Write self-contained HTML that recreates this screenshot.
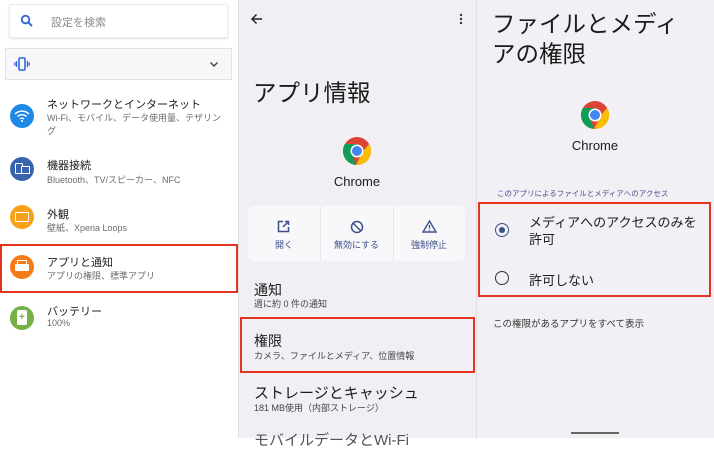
<!DOCTYPE html>
<html><head><meta charset="utf-8"><style>
*{margin:0;padding:0;box-sizing:border-box}
body{width:714px;height:438px;overflow:hidden;position:relative;background:#fff;font-family:"Liberation Sans","Noto Sans CJK JP",sans-serif;color:#202124}
.a{position:absolute;white-space:nowrap}
.p{position:absolute;top:0;height:438px}
.ic{position:absolute;width:24px;height:24px;border-radius:50%;left:10px}
.t{font-size:11px;color:#222}
.s{font-size:9px;color:#6b6b6b}
.red{position:absolute;border:2px solid #e2341f}
</style></head><body>
<div class="p" style="left:0;width:238px;background:#fff"></div>
<div class="p" style="left:238px;width:238px;background:#f1eff4;border-left:1px solid #e2e0e4"></div>
<div class="p" style="left:476px;width:238px;background:#f2f0f5;border-left:1px solid #e0dee2"></div>

<!-- left -->
<div class="a" style="left:9px;top:4px;width:219px;height:34px;background:#fff;border:1px solid #ececec;box-shadow:0 1px 2px rgba(0,0,0,.12);border-radius:2px"></div>
<svg class="a" style="left:20px;top:14px" width="14" height="14" viewBox="0 0 14 14"><circle cx="5.5" cy="5.5" r="3.8" fill="none" stroke="#3367d6" stroke-width="1.8"/><path d="M8.3 8.3L12 12" stroke="#3367d6" stroke-width="2"/></svg>
<div class="a" style="left:51px;top:14px;font-size:11px;color:#8a8a8a">設定を検索</div>
<div class="a" style="left:5px;top:48px;width:227px;height:32px;background:#f7f7f7;border:1px solid #e2e2e2"></div>
<svg class="a" style="left:14px;top:57px" width="16" height="14" viewBox="0 0 16 14"><rect x="5" y="1" width="6" height="12" rx="1" fill="none" stroke="#3367d6" stroke-width="1.6"/><path d="M2.5 4v6M0.8 5.5v3M13.5 4v6M15.2 5.5v3" stroke="#3367d6" stroke-width="1.3"/></svg>
<svg class="a" style="left:209px;top:61px" width="10" height="7" viewBox="0 0 10 7"><path d="M1.5 1.5L5 5L8.5 1.5" fill="none" stroke="#444" stroke-width="1.4"/></svg>

<div class="ic" style="top:104px;background:#1e88e5"></div>
<svg class="a" style="left:14px;top:109px" width="16" height="14" viewBox="0 0 16 14"><path d="M1 5a10 10 0 0 1 14 0M3.5 7.5a6.5 6.5 0 0 1 9 0M6 10a3 3 0 0 1 4 0" fill="none" stroke="#fff" stroke-width="1.5"/><circle cx="8" cy="12" r="1" fill="#fff"/></svg>
<div class="a t" style="left:47px;top:96px">ネットワークとインターネット</div>
<div class="a s" style="left:47px;top:111px">Wi-Fi、モバイル、データ使用量、テザリン</div>
<div class="a s" style="left:47px;top:124px">グ</div>

<div class="ic" style="top:157px;background:#3a63ad"></div>
<div class="a" style="left:15px;top:163px;width:8px;height:11px;border:1.5px solid #fff;border-radius:1px"></div>
<div class="a" style="left:21px;top:166px;width:9px;height:8px;border:1.5px solid #fff;background:#3a63ad"></div>
<div class="a t" style="left:47px;top:157px">機器接続</div>
<div class="a s" style="left:47px;top:173px">Bluetooth、TV/スピーカー、NFC</div>

<div class="ic" style="top:205px;background:#f9a11b"></div>
<div class="a" style="left:15px;top:212px;width:14px;height:10px;border:1.5px solid #fff;border-radius:1px"></div>
<div class="a t" style="left:47px;top:206px">外観</div>
<div class="a s" style="left:47px;top:221px">壁紙、Xperia Loops</div>

<div class="red" style="left:0;top:244px;width:238px;height:49px"></div>
<div class="ic" style="top:255px;background:#f57c14"></div>
<div class="a" style="left:17px;top:260px;width:10px;height:4px;border:1.3px solid #fff;border-bottom:none"></div>
<div class="a" style="left:15px;top:264px;width:14px;height:7px;background:#fff;border-radius:1px"></div>
<div class="a t" style="left:47px;top:254px">アプリと通知</div>
<div class="a s" style="left:47px;top:269px">アプリの権限、標準アプリ</div>

<div class="ic" style="top:306px;background:#74b146"></div>
<div class="a" style="left:17px;top:310px;width:10px;height:15px;background:#fff;border-radius:1.5px"></div>
<div class="a" style="left:19px;top:312px;font-size:10px;color:#74b146;font-weight:bold;line-height:12px">+</div>
<div class="a t" style="left:47px;top:303px">バッテリー</div>
<div class="a s" style="left:47px;top:318px">100%</div>

<!-- middle -->
<svg class="a" style="left:250px;top:13px" width="13" height="12" viewBox="0 0 13 12"><path d="M12 6H2M6.5 1.5L2 6l4.5 4.5" fill="none" stroke="#222" stroke-width="1.5"/></svg>
<svg class="a" style="left:459px;top:13px" width="4" height="12" viewBox="0 0 4 12"><circle cx="2" cy="2" r="1.2" fill="#333"/><circle cx="2" cy="6" r="1.2" fill="#333"/><circle cx="2" cy="10" r="1.2" fill="#333"/></svg>
<div class="a" style="left:253px;top:74px;font-size:23.5px;color:#1c1c1c">アプリ情報</div>
<svg class="a" style="left:342px;top:136px" width="30" height="30" viewBox="-15 -15 30 30"><circle r="14" fill="#db4437"/><path d="M12.1 -7A14 14 0 0 1 -1 14L6 0Z" fill="#fbbc05"/><path d="M-1 14A14 14 0 0 1 -12.1 -7L-6 0Z" fill="#0f9d58"/><path d="M-12.1 -7L-6 3.5L0 -7Z" fill="#0f9d58"/><circle r="6.5" fill="#fff"/><circle r="5" fill="#4285f4"/></svg>
<div class="a" style="left:238px;width:238px;text-align:center;top:174px;font-size:13px;color:#1c1c1c">Chrome</div>
<div class="a" style="left:248px;top:206px;width:217px;height:55px;background:#f8f7fa;border-radius:6px"></div>
<div class="a" style="left:320px;top:206px;width:1px;height:55px;background:#e9e7eb"></div>
<div class="a" style="left:393px;top:206px;width:1px;height:55px;background:#e9e7eb"></div>
<svg class="a" style="left:277px;top:220px" width="13" height="13" viewBox="0 0 13 13"><path d="M6 1.5H1.5v10h10V7M8 1.5h3.5V5M11.5 1.5L6 7" fill="none" stroke="#3d4f8a" stroke-width="1.5"/></svg>
<div class="a" style="left:248px;width:72px;text-align:center;top:238px;font-size:9px;color:#3d4f8a">開く</div>
<svg class="a" style="left:350px;top:220px" width="14" height="14" viewBox="0 0 14 14"><circle cx="7" cy="7" r="5.5" fill="none" stroke="#3d4f8a" stroke-width="1.5"/><path d="M3 3l8 8" stroke="#3d4f8a" stroke-width="1.5"/></svg>
<div class="a" style="left:320px;width:73px;text-align:center;top:238px;font-size:9px;color:#3d4f8a">無効にする</div>
<svg class="a" style="left:422px;top:220px" width="15" height="13" viewBox="0 0 15 13"><path d="M7.5 1L14 12H1Z" fill="none" stroke="#3d4f8a" stroke-width="1.4"/><path d="M7.5 5v3.5M7.5 9.8v1" stroke="#3d4f8a" stroke-width="1.3"/></svg>
<div class="a" style="left:393px;width:72px;text-align:center;top:238px;font-size:9px;color:#3d4f8a">強制停止</div>

<div class="a" style="left:254px;top:280px;font-size:14px;color:#1c1c1c">通知</div>
<div class="a" style="left:254px;top:297px;font-size:9px;color:#444">週に約 0 件の通知</div>
<div class="red" style="left:240px;top:317px;width:235px;height:56px"></div>
<div class="a" style="left:254px;top:331px;font-size:14px;color:#1c1c1c">権限</div>
<div class="a" style="left:254px;top:349px;font-size:9px;color:#444">カメラ、ファイルとメディア、位置情報</div>
<div class="a" style="left:254px;top:382px;font-size:15px;color:#1c1c1c">ストレージとキャッシュ</div>
<div class="a" style="left:254px;top:401px;font-size:9px;color:#444">181 MB使用（内部ストレージ）</div>
<div class="a" style="left:254px;top:429px;font-size:15px;color:#555">モバイルデータとWi-Fi</div>

<!-- right -->
<div class="a" style="left:492px;top:9px;font-size:23.5px;line-height:30px;color:#1c1c1c">ファイルとメディ<br>アの権限</div>
<svg class="a" style="left:580px;top:100px" width="30" height="30" viewBox="-15 -15 30 30"><circle r="14" fill="#db4437"/><path d="M12.1 -7A14 14 0 0 1 -1 14L6 0Z" fill="#fbbc05"/><path d="M-1 14A14 14 0 0 1 -12.1 -7L-6 0Z" fill="#0f9d58"/><path d="M-12.1 -7L-6 3.5L0 -7Z" fill="#0f9d58"/><circle r="6.5" fill="#fff"/><circle r="5" fill="#4285f4"/></svg>
<div class="a" style="left:476px;width:238px;text-align:center;top:138px;font-size:13px;color:#1c1c1c">Chrome</div>
<div class="a" style="left:497px;top:188px;font-size:7.5px;color:#45508a">このアプリによるファイルとメディアへのアクセス</div>
<div class="red" style="left:478px;top:202px;width:233px;height:95px"></div>
<div class="a" style="left:495px;top:223px;width:14px;height:14px;border:1.7px solid #3d4f8a;border-radius:50%"></div>
<div class="a" style="left:499px;top:227px;width:6px;height:6px;background:#3d4f8a;border-radius:50%"></div>
<div class="a" style="left:529px;top:214px;font-size:13px;line-height:17px;color:#1c1c1c">メディアへのアクセスのみを<br>許可</div>
<div class="a" style="left:495px;top:271px;width:14px;height:14px;border:1.5px solid #333;border-radius:50%"></div>
<div class="a" style="left:529px;top:270px;font-size:13px;color:#1c1c1c">許可しない</div>
<div class="a" style="left:493px;top:316px;font-size:9.5px;color:#333">この権限があるアプリをすべて表示</div>
<div class="a" style="left:571px;top:432px;width:48px;height:2px;background:#666"></div>
</body></html>
